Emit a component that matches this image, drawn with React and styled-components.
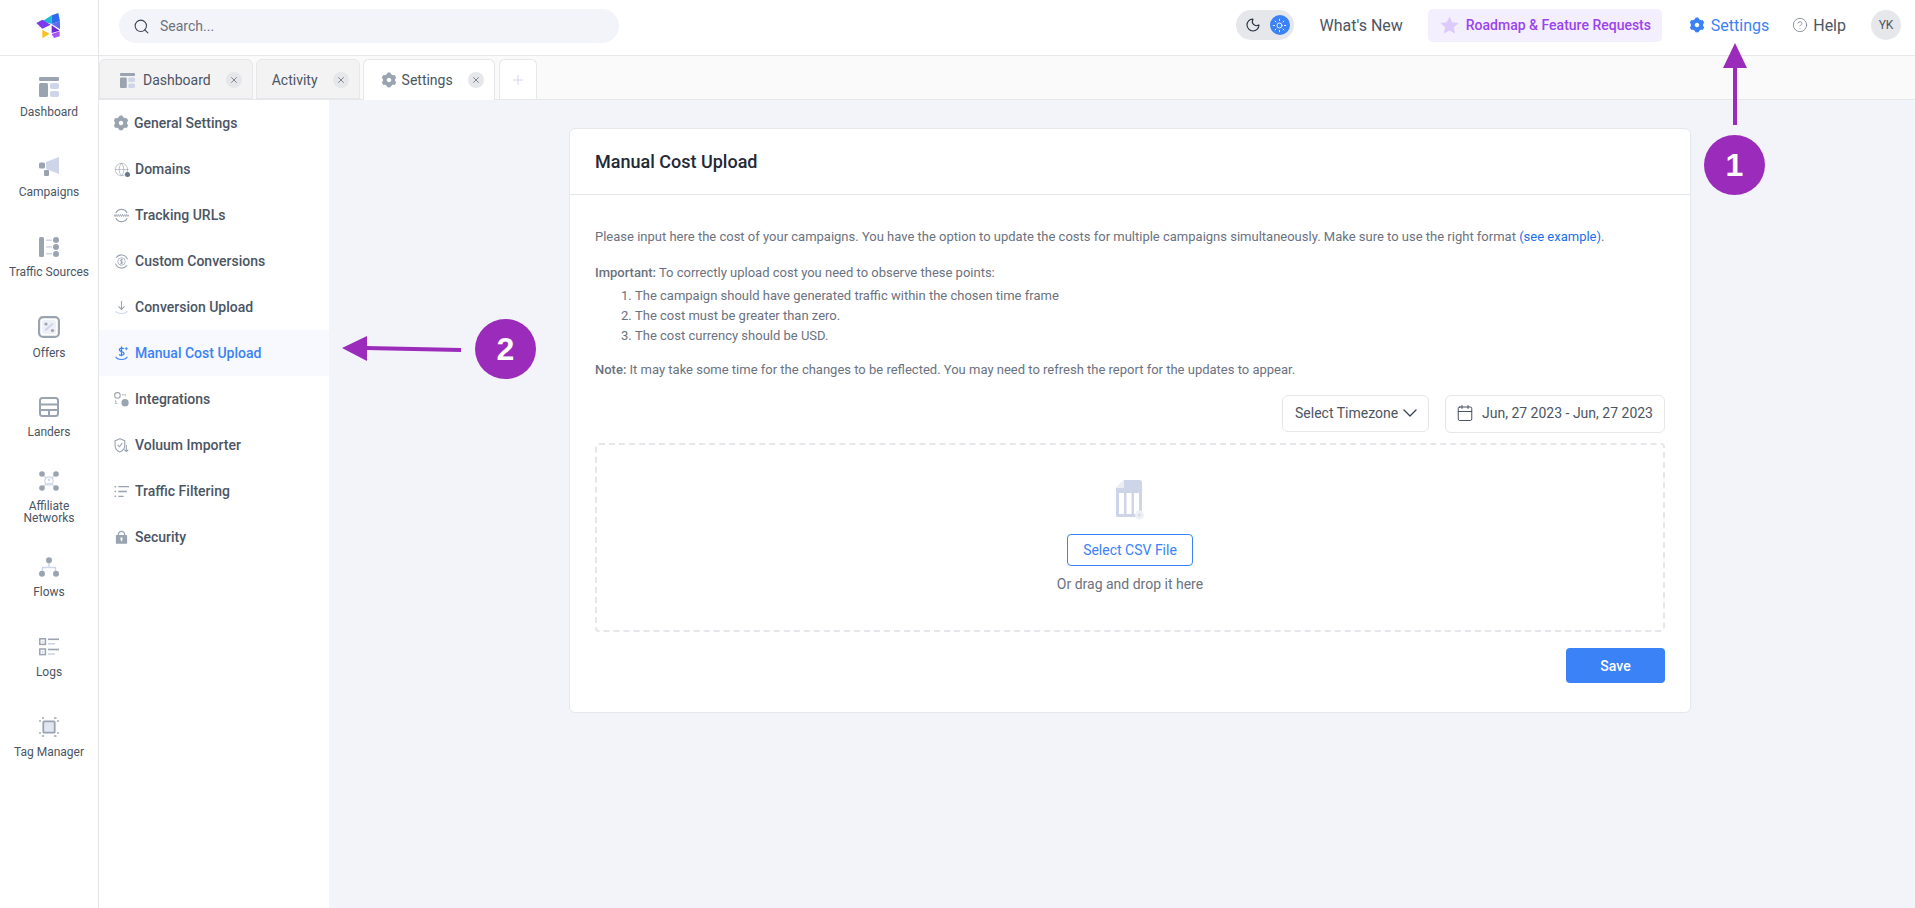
import React from "react";
import styled, { createGlobalStyle } from "styled-components";
import { Search, Moon, Sun, CircleHelp, Calendar, ChevronDown, Plus, X, Globe } from "lucide-react";
import { RiSettings3Fill, RiLock2Fill, RiStarFill } from "react-icons/ri";

const DARK = "#99a4b0";
const LIGHT = "#cfd5e8";
const BLUE = "#3b82f6";

const Global = createGlobalStyle`
  html, body { margin: 0; padding: 0; height: 100%; background: #f3f4f9; }
  * { box-sizing: border-box; }
  body { font-family: Roboto, "Liberation Sans", sans-serif; color: #4b5563; overflow: hidden; }
`;

const Page = styled.div`
  position: relative;
  width: 1915px;
  height: 908px;
  display: flex;
  flex-direction: column;
  overflow: hidden;
`;
const Header = styled.header`
  height: 56px;
  flex: none;
  display: flex;
  align-items: center;
  background: #fff;
  border-bottom: 1px solid #e5e7eb;
`;
const LogoCell = styled.div`
  width: 99px;
  height: 100%;
  flex: none;
  display: flex;
  align-items: center;
  justify-content: center;
  border-right: 1px solid #e5e7eb;
`;
const SearchBox = styled.div`
  margin: -3px 0 0 20px;
  width: 500px;
  height: 34px;
  border-radius: 17px;
  background: #f3f4f9;
  display: flex;
  align-items: center;
  gap: 10px;
  padding-left: 14px;
  font-size: 14px;
  color: #6b7280;
  svg { color: #374151; }
`;
const HeaderRight = styled.div`
  margin-left: auto;
  padding-right: 14px;
  display: flex;
  align-items: center;
  height: 100%;
  padding-bottom: 5px;
`;
const ThemeToggle = styled.div`
  width: 58px;
  height: 30px;
  border-radius: 15px;
  background: #e5e7eb;
  display: flex;
  align-items: center;
  justify-content: space-between;
  padding: 0 4px 0 9px;
  margin-right: 26px;
  color: #1f2937;
`;
const SunDot = styled.span`
  width: 20px;
  height: 20px;
  border-radius: 50%;
  background: ${BLUE};
  display: flex;
  align-items: center;
  justify-content: center;
  color: #fff;
`;
const WhatsNew = styled.span`
  font-size: 16px;
  color: #4b5563;
  margin-right: 25px;
`;
const RoadmapPill = styled.div`
  height: 33px;
  width: 234px;
  border-radius: 5px;
  background: #f3effe;
  display: flex;
  align-items: center;
  gap: 7px;
  padding-left: 12px;
  font-size: 14px;
  font-weight: 500;
  color: #9a44ee;
  margin-right: 28px;
  white-space: nowrap;
  svg { color: #dcc9fd; }
`;
const TopLink = styled.span`
  display: flex;
  align-items: center;
  gap: ${p => p.$gap}px;
  font-size: 16px;
  color: ${p => p.$color};
  margin-right: ${p => p.$after}px;
`;
const Gear = styled(RiSettings3Fill)`
  width: 18px;
  height: 18px;
  margin: -2px;
  flex: none;
`;
const Avatar = styled.span`
  width: 30px;
  height: 30px;
  border-radius: 50%;
  background: #e5e7eb;
  display: flex;
  align-items: center;
  justify-content: center;
  font-size: 12px;
  color: #4b5563;
`;
const Body = styled.div`
  flex: 1;
  display: flex;
  min-height: 0;
`;
const Rail = styled.nav`
  width: 99px;
  flex: none;
  background: #fff;
  border-right: 1px solid #e5e7eb;
  padding-top: 1px;
  display: flex;
  flex-direction: column;
`;
const RailItem = styled.div`
  height: 80px;
  flex: none;
  display: flex;
  flex-direction: column;
  align-items: center;
  justify-content: center;
  gap: 9px;
  font-size: 12px;
  line-height: 12px;
  color: #4b5563;
  text-align: center;
`;
const Main = styled.div`
  flex: 1;
  display: flex;
  flex-direction: column;
  min-width: 0;
`;
const TabBar = styled.div`
  height: 44px;
  flex: none;
  background: #fafafa;
  border-bottom: 1px solid #e5e7eb;
  display: flex;
  align-items: flex-end;
  gap: 3px;
`;
const Tab = styled.div`
  height: ${p => (p.$active ? 41 : 40)}px;
  margin-bottom: ${p => (p.$active ? -1 : 0)}px;
  padding: ${p => (p.$active ? 0 : 2)}px 10px 0 ${p => p.$pad}px;
  display: flex;
  align-items: center;
  gap: ${p => p.$gap || 0}px;
  background: ${p => (p.$active ? "#fff" : "#f3f3f3")};
  border: 1px solid #e5e7eb;
  border-bottom: ${p => (p.$active ? "none" : "1px solid #e5e7eb")};
  border-radius: 6px 6px 0 0;
  font-size: 14px;
  color: #4b5563;
  svg.gear { color: ${DARK}; }
`;
const TabClose = styled.span`
  width: 16px;
  height: 16px;
  margin-left: ${p => p.$ml}px;
  border-radius: 50%;
  background: #e5e7eb;
  display: flex;
  align-items: center;
  justify-content: center;
  color: #6b7280;
`;
const AddTab = styled.div`
  width: 38px;
  height: 40px;
  margin-left: 1px;
  background: #fff;
  border: 1px solid #e5e7eb;
  border-bottom: none;
  border-radius: 6px 6px 0 0;
  display: flex;
  align-items: center;
  justify-content: center;
  color: ${LIGHT};
`;
const Content = styled.div`
  flex: 1;
  display: flex;
  min-height: 0;
`;
const SubNav = styled.aside`
  width: 230px;
  flex: none;
  background: #fff;
`;
const SubItem = styled.div`
  height: 46px;
  display: flex;
  align-items: center;
  gap: 6px;
  padding-left: 15px;
  font-size: 14px;
  font-weight: 500;
  background: ${p => (p.$active ? "#f8f9fe" : "transparent")};
  color: ${p => (p.$active ? BLUE : "#4b5563")};
  svg { flex: none; color: ${p => (p.$active ? BLUE : DARK)}; }
`;
const CardArea = styled.main`
  flex: 1;
  padding: 28px 0 0 240px;
`;
const Card = styled.section`
  width: 1122px;
  background: #fff;
  border: 1px solid #e5e7eb;
  border-radius: 6px;
`;
const CardHead = styled.h2`
  margin: 0;
  height: 66px;
  padding: 0 25px;
  display: flex;
  align-items: center;
  border-bottom: 1px solid #e5e7eb;
  font-size: 18px;
  font-weight: 500;
  color: #1f2937;
`;
const CardBody = styled.div`
  padding: 32px 25px 29px;
  font-size: 13px;
  line-height: 20px;
  color: #6b7280;
`;
const Para = styled.p`
  margin: 0 0 ${p => p.$after}px;
  b { font-weight: 500; color: #6b7280; }
  a { color: #1d6fe8; text-decoration: none; }
`;
const Steps = styled.ol`
  margin: 0 0 14px;
  padding-left: 40px;
`;
const Controls = styled.div`
  display: flex;
  justify-content: flex-end;
  align-items: flex-start;
  gap: 16px;
  margin-bottom: 10px;
`;
const SelectBox = styled.div`
  width: 147px;
  height: 37px;
  border: 1px solid #e5e7eb;
  border-radius: 6px;
  background: #fff;
  display: flex;
  align-items: center;
  justify-content: space-between;
  padding: 0 6px 2px 12px;
  font-size: 14px;
  white-space: nowrap;
  color: #4b5563;
  svg { color: #374151; flex: none; margin-left: -4px; }
`;
const DateBox = styled.div`
  width: 220px;
  height: 38px;
  border: 1px solid #e5e7eb;
  border-radius: 6px;
  background: #fff;
  display: flex;
  align-items: center;
  gap: 8px;
  padding: 0 0 2px 10px;
  font-size: 14px;
  white-space: nowrap;
  color: #4b5563;
  svg { color: #374151; flex: none; }
`;
const Drop = styled.div`
  height: 189px;
  border: 2px dashed #e5e7eb;
  border-radius: 4px;
  display: flex;
  flex-direction: column;
  align-items: center;
  padding-top: 35px;
`;
const OutlineBtn = styled.button`
  margin-top: 14px;
  width: 126px;
  height: 32px;
  background: #fff;
  border: 1px solid ${BLUE};
  border-radius: 4px;
  color: ${BLUE};
  font: 400 14px Roboto, sans-serif;
`;
const DropHint = styled.div`
  margin-top: 8px;
  font-size: 14px;
  color: #6b7280;
`;
const Footer = styled.div`
  display: flex;
  justify-content: flex-end;
  margin-top: 16px;
`;
const SaveBtn = styled.button`
  width: 99px;
  height: 35px;
  border: none;
  border-radius: 4px;
  background: ${BLUE};
  color: #fff;
  font: 500 14px Roboto, sans-serif;
`;
const Badge = styled.div`
  position: absolute;
  left: ${p => p.$x - 31}px;
  top: ${p => p.$y - 30}px;
  width: 61px;
  height: 60px;
  border-radius: 50%;
  background: #9b2bbb;
  color: #fff;
  display: flex;
  align-items: center;
  justify-content: center;
  font-family: "Liberation Sans", Arial, sans-serif;
  font-weight: 700;
  font-size: 32px;
`;
const ArrowSvg = styled.svg`
  position: absolute;
  left: ${p => p.$x}px;
  top: ${p => p.$y}px;
`;
const GlobeWrap = styled.span`
  position: relative;
  display: flex;
`;
const DomainDot = styled.i`
  position: absolute;
  right: -1px;
  bottom: 0;
  width: 5px;
  height: 5px;
  border-radius: 50%;
  background: #64748b;
`;

const Logo = () => (
  <svg width="40" height="40" viewBox="0 0 120 120">
    <polygon points="40,40 68,22 68,48" fill="#22b8d8" />
    <polygon points="68,22 88,15 93,40 68,48" fill="#2f6bed" />
    <polygon points="22,45 40,35 65,50 40,62" fill="#7c3aed" />
    <polygon points="68,48 93,40 93,64" fill="#5b6cf0" />
    <polygon points="40,65 62,78 40,90" fill="#fbbf24" />
    <polygon points="68,52 92,68 68,75" fill="#6d28d9" />
    <polygon points="68,78 92,70 92,85 75,90" fill="#a855f7" />
  </svg>
);

const DashIcon = ({ size = 20 }) => (
  <svg width={size} height={size} viewBox="0 0 20 20">
    <rect x="0" y="0" width="20" height="4" rx="1.2" fill={DARK} />
    <rect x="0" y="6" width="9" height="14" rx="1.5" fill={DARK} />
    <rect x="11" y="6" width="9" height="6" rx="2" fill={LIGHT} />
    <rect x="11" y="14" width="9" height="6" rx="2" fill={LIGHT} />
  </svg>
);
const CampaignIcon = () => (
  <svg width="22" height="20" viewBox="0 0 22 20">
    <polygon points="21,0 21,17 8,12 8,5" fill={LIGHT} />
    <rect x="1" y="5.5" width="6" height="6" rx="1.5" fill={DARK} />
    <rect x="6" y="13" width="5" height="6" rx="1" fill={DARK} />
  </svg>
);
const TrafficIcon = () => (
  <svg width="20" height="20" viewBox="0 0 20 20">
    <rect x="0" y="0" width="5" height="20" rx="1.5" fill={DARK} />
    <rect x="7" y="2.5" width="6" height="1.5" fill={LIGHT} />
    <rect x="7" y="9.2" width="6" height="1.5" fill={LIGHT} />
    <rect x="7" y="16" width="6" height="1.5" fill={LIGHT} />
    <circle cx="17" cy="3" r="3" fill={DARK} />
    <circle cx="17" cy="10" r="3" fill={DARK} />
    <circle cx="17" cy="17" r="3" fill={DARK} />
  </svg>
);
const OfferIcon = () => (
  <svg width="22" height="22" viewBox="0 0 22 22">
    <rect x="1.1" y="1.1" width="19.8" height="19.8" rx="4" fill="#fff" stroke={DARK} strokeWidth="2.2" />
    <rect x="4" y="4" width="14" height="14" rx="2" fill="#eef0f7" />
    <path d="M7 14.5 15 7.5" stroke={LIGHT} strokeWidth="2" />
    <circle cx="8" cy="8" r="1.6" fill={DARK} />
    <circle cx="14.5" cy="14.5" r="1.6" fill={DARK} />
  </svg>
);
const LanderIcon = () => (
  <svg width="20" height="20" viewBox="0 0 20 20" fill="none" stroke={DARK} strokeWidth="2">
    <rect x="1" y="1" width="18" height="18" rx="2.5" />
    <path d="M1 7.5H19M1 13H19M10 13V19" />
  </svg>
);
const AffiliateIcon = () => (
  <svg width="20" height="20" viewBox="0 0 20 20">
    <path d="M3 3 17 17M17 3 3 17" stroke={LIGHT} strokeWidth="1.3" />
    <circle cx="10" cy="10" r="4.2" fill="#fff" stroke={LIGHT} strokeWidth="1.2" />
    <circle cx="10" cy="8.7" r="1.3" fill={LIGHT} />
    <path d="M7.6 13c.4-1.7 4.4-1.7 4.8 0" fill={LIGHT} />
    <circle cx="3" cy="3" r="2.8" fill={DARK} />
    <circle cx="17" cy="3" r="2.8" fill={DARK} />
    <circle cx="3" cy="17" r="2.8" fill={DARK} />
    <circle cx="17" cy="17" r="2.8" fill={DARK} />
  </svg>
);
const FlowIcon = () => (
  <svg width="20" height="20" viewBox="0 0 20 20">
    <path d="M10 5V10M3.5 14V10.5H16.5V14" fill="none" stroke={LIGHT} strokeWidth="1.4" />
    <circle cx="10" cy="3.2" r="3" fill={DARK} />
    <circle cx="3" cy="16.8" r="3" fill={DARK} />
    <circle cx="17" cy="16.8" r="3" fill={DARK} />
  </svg>
);
const LogIcon = () => (
  <svg width="20" height="20" viewBox="0 0 20 20">
    <rect x="0.8" y="1.8" width="5.6" height="5.6" fill="none" stroke={DARK} strokeWidth="1.5" />
    <rect x="0.8" y="12" width="5.6" height="5.6" fill="none" stroke={DARK} strokeWidth="1.5" />
    <rect x="2.7" y="3.7" width="1.8" height="1.8" fill={LIGHT} />
    <rect x="2.7" y="13.9" width="1.8" height="1.8" fill={LIGHT} />
    <rect x="9" y="1.5" width="11" height="1.6" fill={DARK} />
    <rect x="9" y="6" width="7" height="1.6" fill={LIGHT} />
    <rect x="9" y="11.7" width="11" height="1.6" fill={DARK} />
    <rect x="9" y="16.2" width="7" height="1.6" fill={LIGHT} />
  </svg>
);
const TagIcon = () => (
  <svg width="20" height="20" viewBox="0 0 20 20">
    <rect x="4.3" y="4.3" width="11.4" height="11.4" rx="1" fill="#e3e7f2" stroke={DARK} strokeWidth="1.8" />
    <path d="M1 5V3M3 1H5M15 1H17.5M19 3V5M1 15V17M3 19H5M15 19H17.5M19 15V17" stroke={DARK} strokeWidth="1.3" />
  </svg>
);

const SI = ({ children }) => (
  <svg width="15" height="15" viewBox="0 0 14 14" fill="none" stroke="currentColor" strokeWidth="1">
    {children}
  </svg>
);
const WwwIcon = () => (
  <SI>
    <path d="M1.7 4.7A5.8 5.8 0 0 1 12.3 4.7M1.7 9.3A5.8 5.8 0 0 0 12.3 9.3" />
    <path d="M0 6 1 8 2 6 3 8 4 6 5 8 6 6 7 8 8 6 9 8 10 6 11 8 12 6 13 8 14 6" strokeWidth=".8" />
  </SI>
);
const ConvIcon = () => (
  <SI>
    <path d="M2 3.4A6 6 0 0 1 12.6 5M12 10.6A6 6 0 0 1 1.4 9" />
    <circle cx="7" cy="7" r="3.5" strokeWidth=".7" />
    <path d="M8.2 5.6C7.4 4.9 5.9 5.1 5.9 6.1 5.9 7.4 8.3 6.6 8.3 8 8.3 9 6.6 9.1 5.7 8.4M7 4.5V9.6" strokeWidth=".8" />
  </SI>
);
const UploadIcon = () => (
  <SI>
    <path d="M7 1V8.5M4.2 6 7 8.8 9.8 6" />
    <path d="M1.5 10.5C3 13.2 11 13.2 12.5 10.5" stroke={LIGHT} />
  </SI>
);
const CostIcon = () => (
  <SI>
    <path d="M9.2 2.7C8.2 1.7 5 1.6 5 3.6 5 5.8 9.4 4.6 9.4 7 9.4 8.8 6 9 4.7 7.9M7 .5V9.6" strokeWidth="1.2" />
    <path d="M1.5 10C3 13.4 11 13.4 12.5 10" />
    <path d="M11.5 1V4M10 2.5H13" strokeWidth=".8" />
  </SI>
);
const IntegrationIcon = () => (
  <SI>
    <circle cx="3.2" cy="3.2" r="2.6" />
    <path d="M7.5 2.5H10.5V4.5M1.5 8V10.5H4" strokeDasharray="1.5 .8" />
    <circle cx="10.3" cy="10" r="3.4" fill="currentColor" stroke="none" />
  </SI>
);
const ShieldIcon = () => (
  <SI>
    <path d="M5.5.7 10 2.5V7C10 10 7.5 12.2 5.5 13 3.5 12.2 1 10 1 7V2.5Z" />
    <path d="M3.4 6.5 5 8.2 7.8 4.8" />
    <path d="M11.5 6.5V12.5M9.7 10.8 11.5 12.8 13.3 10.8" />
  </SI>
);
const FilterIcon = () => (
  <SI>
    <path d="M4 2.5H14M4 7H12M4 11.5H9" strokeWidth="1.2" />
    <path d="M0.6 2.5H2M0.6 7H2M0.6 11.5H2" strokeWidth="1.4" />
  </SI>
);
const GlobeIcon = () => (
  <GlobeWrap>
    <Globe size={15} strokeWidth={1} />
    <DomainDot />
  </GlobeWrap>
);
const CsvIcon = () => (
  <svg width="29" height="40" viewBox="0 0 29 40">
    <path d="M8 0H23.5A2.5 2.5 0 0 1 26 2.5V35.5A1.5 1.5 0 0 1 24.5 37H1.5A1.5 1.5 0 0 1 0 35.5V8Z" fill={LIGHT} />
    <path d="M8 0V8H0Z" fill="#eceef6" />
    <rect x="3" y="13" width="5" height="21" fill="#fff" />
    <rect x="10.5" y="13" width="5" height="21" fill="#fff" />
    <rect x="18" y="13" width="5" height="21" fill="#fff" />
    <circle cx="23.5" cy="35" r="4.5" fill="#eef0f7" />
    <path d="M23.5 33V37M21.5 35H25.5" stroke={LIGHT} strokeWidth=".8" />
  </svg>
);

const railItems = [
  [<DashIcon key="i" />, "Dashboard"],
  [<CampaignIcon key="i" />, "Campaigns"],
  [<TrafficIcon key="i" />, "Traffic Sources"],
  [<OfferIcon key="i" />, "Offers"],
  [<LanderIcon key="i" />, "Landers"],
  [<AffiliateIcon key="i" />, <>Affiliate<br />Networks</>],
  [<FlowIcon key="i" />, "Flows"],
  [<LogIcon key="i" />, "Logs"],
  [<TagIcon key="i" />, "Tag Manager"],
];
const subItems = [
  [<Gear key="i" />, "General Settings"],
  [<GlobeIcon key="i" />, "Domains"],
  [<WwwIcon key="i" />, "Tracking URLs"],
  [<ConvIcon key="i" />, "Custom Conversions"],
  [<UploadIcon key="i" />, "Conversion Upload"],
  [<CostIcon key="i" />, "Manual Cost Upload", true],
  [<IntegrationIcon key="i" />, "Integrations"],
  [<ShieldIcon key="i" />, "Voluum Importer"],
  [<FilterIcon key="i" />, "Traffic Filtering"],
  [<RiLock2Fill key="i" size={15} />, "Security"],
];

export default function App() {
  return (
    <Page>
      <Global />
      <Header>
        <LogoCell><Logo /></LogoCell>
        <SearchBox>
          <Search size={17} strokeWidth={1.5} />
          Search...
        </SearchBox>
        <HeaderRight>
          <ThemeToggle>
            <Moon size={16} strokeWidth={1.6} />
            <SunDot><Sun size={15} strokeWidth={1.4} /></SunDot>
          </ThemeToggle>
          <WhatsNew>What's New</WhatsNew>
          <RoadmapPill>
            <RiStarFill size={19} />
            Roadmap &amp; Feature Requests
          </RoadmapPill>
          <TopLink $gap={7} $color={BLUE} $after={23}>
            <Gear />
            Settings
          </TopLink>
          <TopLink $gap={5} $color="#4b5563" $after={25}>
            <CircleHelp size={16} strokeWidth={1.3} color="#7b8794" />
            Help
          </TopLink>
          <Avatar>YK</Avatar>
        </HeaderRight>
      </Header>
      <Body>
        <Rail>
          {railItems.map(([icon, label], i) => (
            <RailItem key={i}>
              {icon}
              <span>{label}</span>
            </RailItem>
          ))}
        </Rail>
        <Main>
          <TabBar>
            <Tab $pad={20} $gap={8}>
              <DashIcon size={15} />
              Dashboard
              <TabClose $ml={7}><X size={10} /></TabClose>
            </Tab>
            <Tab $pad={15}>
              Activity
              <TabClose $ml={15}><X size={10} /></TabClose>
            </Tab>
            <Tab $pad={18} $gap={6} $active>
              <Gear className="gear" />
              Settings
              <TabClose $ml={9}><X size={10} /></TabClose>
            </Tab>
            <AddTab><Plus size={16} strokeWidth={1.4} /></AddTab>
          </TabBar>
          <Content>
            <SubNav>
              {subItems.map(([icon, label, active], i) => (
                <SubItem key={i} $active={active}>
                  {icon}
                  {label}
                </SubItem>
              ))}
            </SubNav>
            <CardArea>
              <Card>
                <CardHead>Manual Cost Upload</CardHead>
                <CardBody>
                  <Para $after={16}>
                    Please input here the cost of your campaigns. You have the option to update the costs for multiple campaigns simultaneously. Make sure to use the right format <a href="#x">(see example)</a>.
                  </Para>
                  <Para $after={3}>
                    <b>Important:</b> To correctly upload cost you need to observe these points:
                  </Para>
                  <Steps>
                    <li>The campaign should have generated traffic within the chosen time frame</li>
                    <li>The cost must be greater than zero.</li>
                    <li>The cost currency should be USD.</li>
                  </Steps>
                  <Para $after={15}>
                    <b>Note:</b> It may take some time for the changes to be reflected. You may need to refresh the report for the updates to appear.
                  </Para>
                  <Controls>
                    <SelectBox>Select Timezone <ChevronDown size={24} strokeWidth={1.3} /></SelectBox>
                    <DateBox>
                      <Calendar size={18} strokeWidth={1.2} />
                      Jun, 27 2023 - Jun, 27 2023
                    </DateBox>
                  </Controls>
                  <Drop>
                    <CsvIcon />
                    <OutlineBtn>Select CSV File</OutlineBtn>
                    <DropHint>Or drag and drop it here</DropHint>
                  </Drop>
                  <Footer><SaveBtn>Save</SaveBtn></Footer>
                </CardBody>
              </Card>
            </CardArea>
          </Content>
        </Main>
      </Body>
      <ArrowSvg $x={1720} $y={40} width="30" height="90" viewBox="0 0 30 90">
        <polygon points="15,3 27,28 3,28" fill="#9b2bbb" />
        <rect x="13" y="27" width="4" height="58" fill="#9b2bbb" />
      </ArrowSvg>
      <Badge $x={1735} $y={165}>1</Badge>
      <ArrowSvg $x={340} $y={332} width="125" height="32" viewBox="0 0 125 32">
        <polygon points="2,16 27,4 27,29" fill="#9b2bbb" />
        <polygon points="26,14 121,16 121,20 26,18" fill="#9b2bbb" />
      </ArrowSvg>
      <Badge $x={506} $y={349}>2</Badge>
    </Page>
  );
}
